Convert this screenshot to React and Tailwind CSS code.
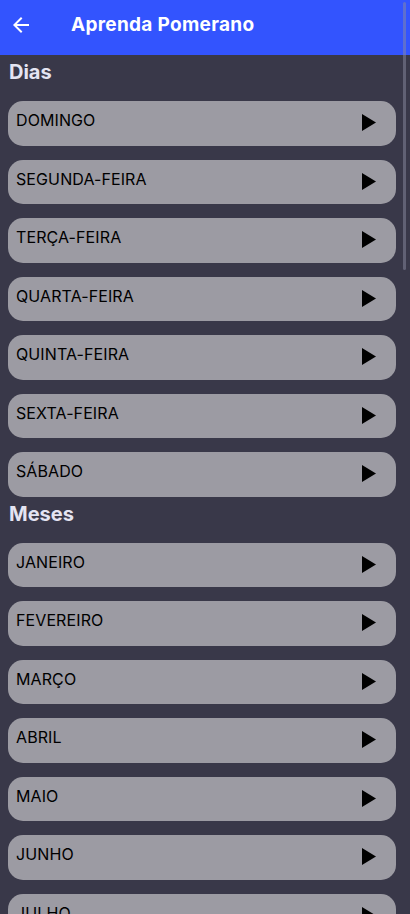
import React from "react";

const dias = ["DOMINGO", "SEGUNDA-FEIRA", "TERÇA-FEIRA", "QUARTA-FEIRA", "QUINTA-FEIRA", "SEXTA-FEIRA", "SÁBADO"];
const meses = ["JANEIRO", "FEVEREIRO", "MARÇO", "ABRIL", "MAIO", "JUNHO", "JULHO", "AGOSTO"];

function Item({ label }) {
  return (
    <div className="flex h-[44.5px] shrink-0 items-center justify-between rounded-[15px] bg-[#9c9ba3] pl-2 pr-[20px]">
      <span className="pb-[6px] text-[16px] tracking-[0.1px] text-black" style={{ fontFamily: "Inter, 'Noto Sans', sans-serif" }}>{label}</span>
      <svg width="14" height="17" viewBox="0 0 14 17" className="mt-[-1px]">
        <polygon points="0,0 14,8.5 0,17" fill="#000" />
      </svg>
    </div>
  );
}

function Section({ title, items }) {
  return (
    <section className="flex flex-col">
      <div className="h-[46px] shrink-0 pl-px pt-[7px] text-[20px] font-bold leading-[20px] text-[#e4e4f2]" style={{ fontFamily: "Inter, 'Noto Sans', sans-serif" }}>
        {title}
      </div>
      <div className="flex flex-col gap-[14px]">
        {items.map((d) => (
          <Item key={d} label={d} />
        ))}
      </div>
    </section>
  );
}

export default function App() {
  return (
    <div className="relative h-[914px] w-[410px] overflow-hidden bg-[#393849]" style={{ fontFamily: "Inter, 'Noto Sans', sans-serif" }}>
      <header className="flex h-[55px] items-center bg-[#3354fe] pl-[9px]">
        <svg width="24" height="24" viewBox="0 0 24 24" className="mt-[-5px]">
          <path d="M20 11H7.83l5.59-5.59L12 4l-8 8 8 8 1.41-1.41L7.83 13H20v-2z" fill="#fff" />
        </svg>
        <h1 className="ml-[38px] mt-[-4px] text-[19px] font-bold tracking-[0.3px] text-white">Aprenda Pomerano</h1>
      </header>
      <main className="flex flex-col pl-2 pr-[14px]">
        <Section title="Dias" items={dias} />
        <Section title="Meses" items={meses} />
      </main>
      <div className="absolute right-[4px] top-[2px] h-[268px] w-[3px] rounded-full bg-[#8a8aa0]/50" />
    </div>
  );
}
